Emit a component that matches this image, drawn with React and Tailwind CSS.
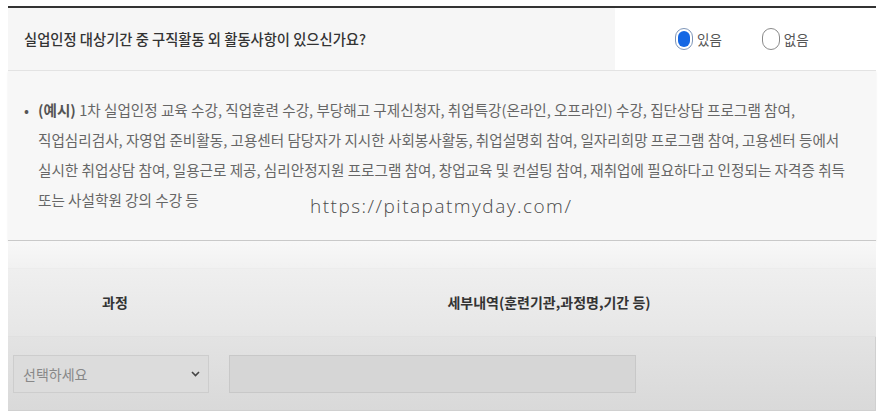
import React from "react";

const kr = { fontFamily: '"Noto Sans CJK KR", "Noto Sans", sans-serif' };

const Radio = ({ checked, label }) => (
  <label className="flex items-center gap-[4px] cursor-pointer">
    {checked ? (
      <span className="flex h-[22px] w-[18px] rounded-full border border-[#7d95b8] bg-white p-[2px]">
        <span className="h-full w-full rounded-full bg-[#1467e4]"></span>
      </span>
    ) : (
      <span className="h-[22px] w-[18px] rounded-full border border-[#8a8a8a] bg-white"></span>
    )}
    <span className="text-[13.5px] text-[#555]">{label}</span>
  </label>
);

export default function App() {
  return (
    <div className="relative h-[414px] w-[886px] overflow-hidden bg-white" style={kr}>
      <div className="ml-[8px] mr-[10px] mt-[6px] border-t-2 border-[#333]">
        {/* ---- question row ---- */}
        <div className="flex h-[63px] border-b border-[#e4e4e4]">
          <div className="flex flex-1 items-center bg-[#f6f6f6] pl-4">
            <p className="text-[14.3px] font-medium text-[#333]">
              실업인정 대상기간 중 구직활동 외 활동사항이 있으신가요?
            </p>
          </div>
          <div className="flex w-[261px] items-center gap-[40px] bg-white pl-[60px]">
            <Radio checked label="있음" />
            <Radio label="없음" />
          </div>
        </div>

        {/* ---- example text ---- */}
        <div className="h-[170px] border-b border-[#c9c9c9] bg-[#f7f7f7] pl-4 pt-[24px] shadow-[0_1px_2px_rgba(0,0,0,0.08)]">
          <div className="flex text-[14.6px] leading-[30px] text-[#666]">
            <span className="w-[14px] shrink-0 text-[#555]">•</span>
            <p>
              <b className="font-bold text-[#555]">(예시)</b> 1차 실업인정 교육 수강, 직업훈련 수강, 부당해고 구제신청자, 취업특강(온라인, 오프라인) 수강, 집단상담 프로그램 참여,
              <br />
              직업심리검사, 자영업 준비활동, 고용센터 담당자가 지시한 사회봉사활동, 취업설명회 참여, 일자리희망 프로그램 참여, 고용센터 등에서
              <br />
              실시한 취업상담 참여, 일용근로 제공, 심리안정지원 프로그램 참여, 창업교육 및 컨설팅 참여, 재취업에 필요하다고 인정되는 자격증 취득
              <br />
              또는 사설학원 강의 수강 등
            </p>
          </div>
        </div>

        {/* ---- spacer ---- */}
        <div className="h-[28px] border-b border-[#ececec] bg-gradient-to-b from-[#f8f8f8] to-[#f1f1f1]"></div>

        {/* ---- table header ---- */}
        <div className="flex h-[68px] items-center border-b border-[#e0e0e0] bg-gradient-to-b from-[#efefef] to-[#e6e6e6] text-[14px] font-bold text-[#333]">
          <div className="w-[214px] text-center">과정</div>
          <div className="flex-1 text-center">세부내역(훈련기관,과정명,기간 등)</div>
        </div>

        {/* ---- input row ---- */}
        <div className="flex h-[74px] items-start gap-[20px] border-b border-r border-[#d0d0d0] bg-gradient-to-b from-[#e3e3e3] to-[#d9d9d9] pl-[5px] pt-[18px]">
          <div className="flex h-[38px] w-[196px] items-center justify-between border border-[#cdcdcd] bg-[#dcdcdc] pl-[9px] pr-[8px]">
            <span className="text-[14px] text-[#888]">선택하세요</span>
            <svg width="9" height="6" viewBox="0 0 9 6" fill="none">
              <path d="M1 1l3.5 3.5L8 1" stroke="#444" strokeWidth="1.6" />
            </svg>
          </div>
          <div className="h-[38px] w-[407px] border border-[#c8c8c8] bg-[#d6d6d6]"></div>
        </div>
      </div>

      {/* watermark */}
      <div
        className="absolute left-[310px] top-[192px] text-[19px] tracking-[1.5px] text-[#4a4a4a]"
        style={{ fontFamily: '"Open Sans", sans-serif', fontWeight: 300 }}
      >
        https://pitapatmyday.com/
      </div>
    </div>
  );
}
